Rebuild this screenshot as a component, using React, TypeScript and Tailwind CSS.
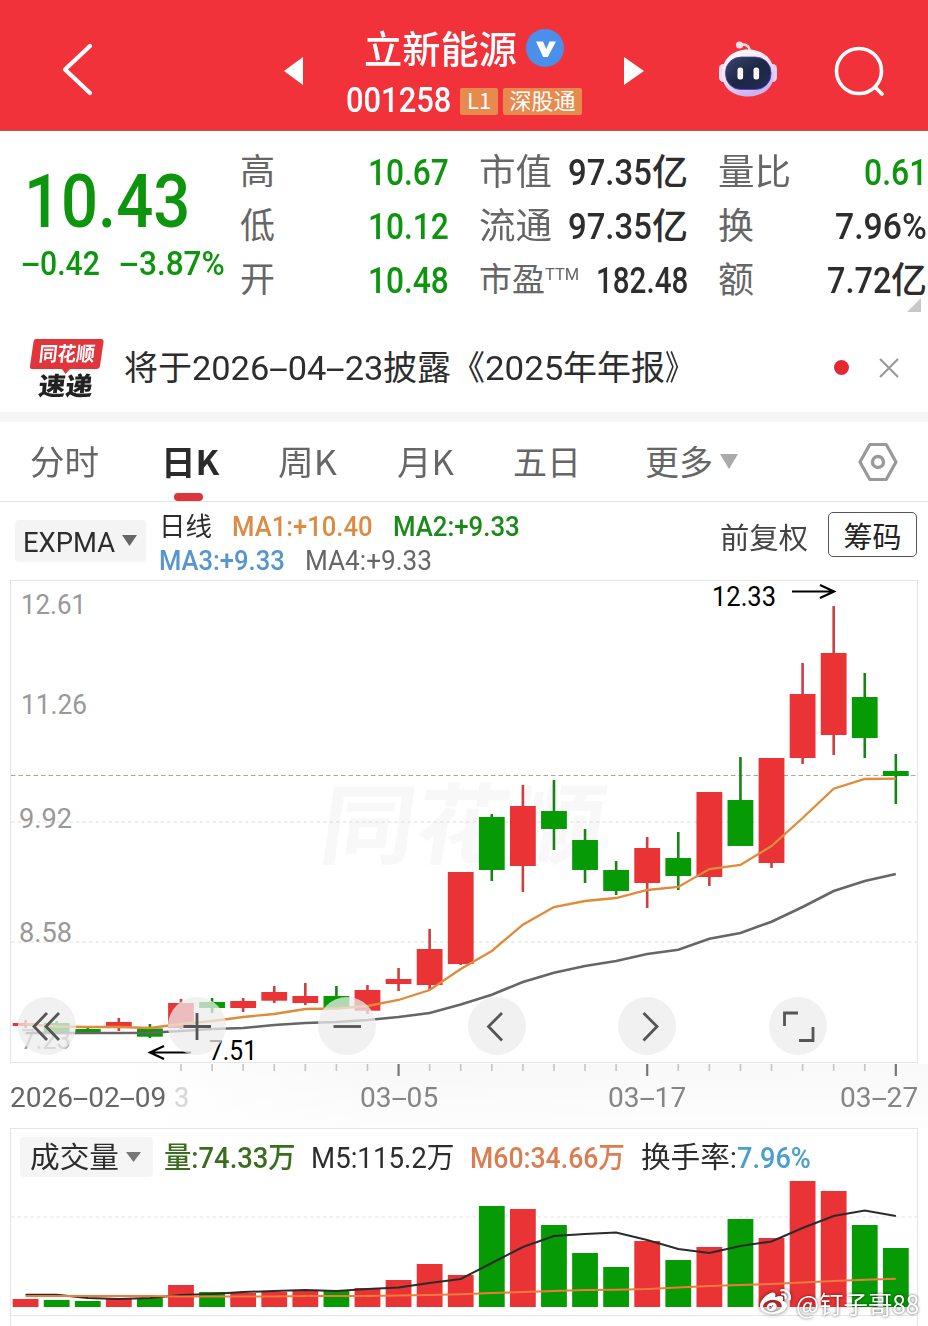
import { useLayoutEffect, useRef } from 'react';
import type { ReactNode } from 'react';
import { FaWeibo } from 'react-icons/fa';

const RED = '#e93335';
const GREEN = '#069a04';
const STEP = 31.08;

const xAt = (i: number) => 25.6 + i * STEP;

// [direction, open/close top, open/close bottom, high, low]
type Candle = ['up' | 'down', number, number, number, number];

const candles: Candle[] = [
    ['up', 1023, 1026, 1020, 1028],
    ['down', 1023, 1032, 1021, 1034],
    ['down', 1029, 1033.5, 1028, 1034],
    ['up', 1022, 1027, 1018, 1031],
    ['down', 1028.5, 1036.7, 1024, 1038],
    ['up', 1003, 1028, 999, 1029],
    ['down', 1002, 1008, 998, 1013],
    ['up', 1001, 1008, 998, 1012],
    ['up', 992, 1000.7, 986, 1003],
    ['up', 996, 1003, 983, 1005],
    ['down', 996, 1008, 986, 1009],
    ['up', 990, 1010.7, 985, 1014],
    ['up', 979, 984, 968, 991],
    ['up', 949, 985, 929, 990],
    ['up', 872, 964, 872, 965],
    ['down', 817, 870, 814, 881],
    ['up', 806, 866, 785, 892],
    ['down', 811, 829, 780, 850],
    ['down', 840, 870, 829, 883],
    ['down', 870, 891, 861, 895],
    ['up', 848, 883, 837, 908],
    ['down', 858, 876, 832, 890],
    ['up', 792, 877, 792, 886],
    ['down', 800, 846, 757, 846],
    ['up', 758, 863, 758, 868],
    ['up', 694, 758, 663, 764],
    ['up', 653, 735, 606, 755],
    ['down', 697, 738, 673, 758],
    ['down', 771, 776, 754, 804],
];

const ma1 = [
    1024, 1026.5, 1027, 1027, 1028, 1024, 1021, 1017, 1014, 1009, 1008.5, 1006, 1000, 990, 969, 951, 924.7, 907, 901,
    898, 890, 887, 869, 865, 846, 818, 788.7, 779, 778.7,
];
const ma4 = [
    1033, 1033, 1033, 1033, 1032.7, 1031, 1029, 1028, 1025, 1023, 1022, 1020, 1017, 1013, 1004.5, 994.7, 982, 972.7, 966,
    961, 954, 949.7, 938.7, 933, 921.7, 907, 891, 881, 874,
];
const volumes = [
    1299, 1300, 1301, 1299, 1298, 1285, 1292, 1293, 1292, 1291, 1291, 1288, 1280, 1264, 1275, 1206, 1209, 1225, 1253,
    1267, 1241, 1260, 1247, 1219, 1238, 1181, 1191, 1225, 1248,
];
const volM5 = [
    1294.7, 1294.7, 1298, 1299, 1298, 1295, 1294, 1292, 1291, 1290, 1291, 1289, 1287.5, 1283, 1279, 1263, 1247, 1236,
    1234, 1232.5, 1240, 1249, 1253, 1246, 1241.5, 1228, 1216, 1210.5, 1216,
];
const volM60 = [
    1296, 1296, 1296, 1296, 1296, 1296.5, 1296.5, 1296.5, 1296.5, 1296, 1296, 1296, 1295.5, 1295, 1294.2, 1293, 1292,
    1291, 1290, 1289.7, 1289, 1287.5, 1286, 1285, 1284, 1282.5, 1281, 1279.8, 1278.7,
];

const toPoints = (ys: number[]) => ys.map((y, i) => `${xAt(i)},${y}`).join(' ');

// Splits the text so that hyphens can be drawn as wide as a digit.
const withDashes = (text: string) =>
    text.split(/(-)/).map((part, i) =>
        part === '-' ? (
            <span key={i} className="mx-[0.13em] inline-block scale-x-[2]">
                -
            </span>
        ) : (
            part
        )
    );

type FitProps = {
    className: string;
    children: ReactNode;
};

// Squeezes a line of text into the width of its box.
const Fit = ({ className, children }: FitProps) => {
    const box = useRef<HTMLDivElement>(null);
    const line = useRef<HTMLSpanElement>(null);

    useLayoutEffect(() => {
        if (!box.current || !line.current) {
            return;
        }
        const scale = box.current.clientWidth / line.current.offsetWidth;
        line.current.style.transform = `scaleX(${scale})`;
    }, []);

    return (
        <div ref={box} className={`shrink-0 whitespace-nowrap ${className}`}>
            <span ref={line} className="inline-block origin-left">
                {typeof children === 'string' ? withDashes(children) : children}
            </span>
        </div>
    );
};

const Caret = ({ className }: { className: string }) => (
    <svg viewBox="0 0 16 12" preserveAspectRatio="none" className={className}>
        <path d="M0 0H16L8 12Z" fill="currentColor" />
    </svg>
);

const RobotIcon = () => (
    <svg viewBox="0 0 60 58" className="h-[58px] w-[60px]">
        <defs>
            <linearGradient id="shell" x1="0" y1="0" x2="0.4" y2="1">
                <stop offset="0" stopColor="#ffffff" />
                <stop offset="0.55" stopColor="#f1e2f3" />
                <stop offset="1" stopColor="#c9b4f0" />
            </linearGradient>
            <linearGradient id="visor" x1="0" y1="0" x2="1" y2="1">
                <stop offset="0" stopColor="#3a466c" />
                <stop offset="0.5" stopColor="#1d2745" />
                <stop offset="1" stopColor="#222a55" />
            </linearGradient>
        </defs>
        <path d="M22 6C26 3 31 5 32 11" fill="none" stroke="#ffdfe4" strokeWidth="2.4" strokeLinecap="round" />
        <circle cx="21.5" cy="5" r="3.6" fill="#ffe3e7" />
        <rect x="1" y="24" width="9" height="18" rx="4.5" fill="#f6dcea" />
        <rect x="50" y="24" width="9" height="18" rx="4.5" fill="#e6d2f5" />
        <path d="M30 9.500C45 9.500 56 19 56 33.500C56 48 45 56.500 30 56.500C15 56.500 4 48 4 33.500C4 19 15 9.500 30 9.500Z" fill="url(#shell)" />
        <rect x="7.500" y="17" width="45.500" height="32.500" rx="15.500" fill="url(#visor)" stroke="#4a3fc0" strokeWidth="0.8" />
        <rect x="19.500" y="27.500" width="5.600" height="12" rx="2.500" fill="#fff" />
        <rect x="35.500" y="27.500" width="5.600" height="12" rx="2.500" fill="#fff" />
    </svg>
);

const Header = () => (
    <header className="flex h-[131px] items-start border-b border-[#b85560] bg-[#f1323a] text-white">
        <svg viewBox="0 0 32 54" className="mt-[42px] ml-[61px] h-[54px] w-8">
            <path d="M29 4L4 27.500L29 51" fill="none" stroke="#fff" strokeWidth="4.200" strokeLinecap="round" strokeLinejoin="round" />
        </svg>
        <svg viewBox="0 0 20 28" className="mt-[57px] ml-[191px] h-7 w-5">
            <path d="M0 14L19 0V28Z" fill="#fff" />
        </svg>
        <div className="ml-[42px] w-[238px] pt-[20px]">
            <div className="flex h-[54px] items-center pl-[18px]">
                <Fit className="w-[153px] text-[38px] leading-[50px] font-medium">立新能源</Fit>
                <svg viewBox="0 0 38 38" className="mt-px ml-[9px] size-[38px]">
                    <circle cx="19" cy="19" r="19" fill="#4a90ea" />
                    <path d="M10 12.500H17L20.300 20L23.500 12.500H30L21.800 28H17.200Z" fill="#fff" />
                </svg>
            </div>
            <div className="flex h-[54px] items-center">
                <Fit className="w-[105px] font-['Roboto'] text-[35px] leading-[40px] font-medium">001258</Fit>
                <div className="ml-[9px] flex h-[27px] w-[38px] items-center justify-center rounded-[2px] bg-[#e68a4e]">
                    <Fit className="-mt-[3px] w-[24px] text-[22px] leading-[25px]">L1</Fit>
                </div>
                <div className="ml-[5px] flex h-[27px] w-[79px] items-center justify-center rounded-[2px] bg-[#e68a4e]">
                    <Fit className="-mt-[4px] w-[66px] text-[22px] leading-[25px]">深股通</Fit>
                </div>
            </div>
        </div>
        <svg viewBox="0 0 20 28" className="mt-[57px] ml-[40px] h-7 w-5">
            <path d="M0 0L20 14L0 28Z" fill="#fff" />
        </svg>
        <div className="mt-[40px] ml-[74px]">
            <RobotIcon />
        </div>
        <svg viewBox="0 0 52 52" className="mt-[46px] ml-[56px] size-[52px]">
            <circle cx="25" cy="25" r="22.500" fill="none" stroke="#fff" strokeWidth="3.600" />
            <path d="M41 41L48 48" stroke="#fff" strokeWidth="3.800" strokeLinecap="round" />
        </svg>
    </header>
);

const Quote = () => (
    <section className="flex h-[200px] pt-[14px]">
        <div className="w-[240px] pl-[22px] font-['Roboto'] font-medium text-[#0d950d]">
            <Fit className="mt-[12px] ml-[2px] w-[166px] text-[75px] leading-[88px]">10.43</Fit>
            <div className="mt-[-3px] flex">
                <Fit className="w-[78px] text-[34px] leading-[42px]">-0.42</Fit>
                <Fit className="ml-[20px] w-[105px] text-[34px] leading-[42px]">-3.87%</Fit>
            </div>
        </div>
        <div className="grid w-[209px] auto-rows-[54px] grid-cols-[1fr_auto] text-[#666]">
            {[
                ['高', '10.67'],
                ['低', '10.12'],
                ['开', '10.48'],
            ].map(([label, value]) => (
                <div key={label} className="contents">
                    <span className="-mt-[3px] text-[35px] leading-[54px]">{label}</span>
                    <Fit className="w-[81px] font-['Roboto'] text-[36px] leading-[56px] font-medium text-[#0d950d]">{value}</Fit>
                </div>
            ))}
        </div>
        <div className="ml-[30px] w-[209px] text-[#666]">
            {['市值', '流通'].map((label) => (
                <div key={label} className="flex h-[54px] justify-between">
                    <Fit className="-mt-[3px] w-[73px] text-[36px] leading-[54px]">{label}</Fit>
                    <div className="flex text-[#2d2d2d]">
                        <Fit className="w-[84px] font-['Roboto'] text-[36px] leading-[56px] font-medium">97.35</Fit>
                        <span className="-mt-[3px] w-[36px] text-[36px] leading-[54px] font-medium">亿</span>
                    </div>
                </div>
            ))}
            <div className="flex h-[54px] justify-between">
                <div className="flex">
                    <Fit className="-mt-[3px] w-[66px] text-[33px] leading-[54px]">市盈</Fit>
                    <Fit className="w-[34px] font-['Roboto'] text-[17px] leading-[42px]">TTM</Fit>
                </div>
                <Fit className="w-[92px] font-['Roboto'] text-[36px] leading-[56px] font-medium text-[#2d2d2d]">182.48</Fit>
            </div>
        </div>
        <div className="ml-[30px] w-[209px] text-[#666]">
            <div className="flex h-[54px] justify-between">
                <Fit className="-mt-[3px] w-[73px] text-[36px] leading-[54px]">量比</Fit>
                <Fit className="w-[63px] font-['Roboto'] text-[36px] leading-[56px] font-medium text-[#0d950d]">0.61</Fit>
            </div>
            <div className="flex h-[54px] justify-between">
                <span className="-mt-[3px] text-[36px] leading-[54px]">换</span>
                <Fit className="w-[92px] font-['Roboto'] text-[36px] leading-[56px] font-medium text-[#2d2d2d]">7.96%</Fit>
            </div>
            <div className="flex h-[54px] justify-between">
                <span className="-mt-[3px] text-[36px] leading-[54px]">额</span>
                <div className="flex text-[#2d2d2d]">
                    <Fit className="w-[64px] font-['Roboto'] text-[36px] leading-[56px] font-medium">7.72</Fit>
                    <span className="-mt-[3px] w-[36px] text-[36px] leading-[54px] font-medium">亿</span>
                </div>
            </div>
            <svg viewBox="0 0 14 14" className="-mt-[9px] mr-[6px] ml-auto size-[14px]">
                <path d="M14 0V14H0Z" fill="#c8c8c8" />
            </svg>
        </div>
    </section>
);

const NewsStrip = () => (
    <section className="flex h-[81px] items-center pb-[8px]">
        <div className="relative ml-[30px] h-[60px] w-[74px]">
            <svg viewBox="0 0 74 60" className="absolute inset-0">
                <path d="M6 1H71Q74 1 73.500 4L70 28Q69.500 31 66.500 31H40L35.500 36L32 31H2Q-.4 31 0 28L3.500 4Q4 1 6 1Z" fill="#e0353a" />
            </svg>
            <Fit className="absolute top-[3px] left-[9px] w-[56px] -skew-x-6 text-[20px] leading-[24px] font-bold text-white">同花顺</Fit>
            <Fit className="absolute top-[34px] left-[9px] w-[54px] -skew-x-6 text-[25px] leading-[24px] font-black text-[#222]">速递</Fit>
        </div>
        <div className="-mt-[2px] ml-[20px] flex text-[34px] leading-[50px] text-[#2d2d2d]">
            <Fit className="w-[68px]">将于</Fit>
            <Fit className="mt-[2px] w-[191px] font-['Roboto']">2026-04-23</Fit>
            <Fit className="w-[68px]">披露</Fit>
            <Fit className="w-[34px]">《</Fit>
            <Fit className="mt-[2px] w-[78px] font-['Roboto']">2025</Fit>
            <Fit className="w-[102px]">年年报</Fit>
            <Fit className="w-[28px]">》</Fit>
        </div>
        <span className="ml-[141px] size-[15px] rounded-full bg-[#e3292f]" />
        <svg viewBox="0 0 20 20" className="ml-[30px] size-5">
            <path d="M1 1L19 19M19 1L1 19" stroke="#999" strokeWidth="2.200" />
        </svg>
    </section>
);

const Tabs = () => (
    <nav className="flex h-[90px] border-t-[10px] border-b border-t-[#f6f6f6] border-b-[#e4e4e4] pl-[30px] text-[34px] leading-[78px] text-[#666]">
        <Fit className="w-[69px]">分时</Fit>
        <div className="relative ml-[62px] w-[58px]">
            <Fit className="w-[58px] font-bold text-[#2b2b2b]">日K</Fit>
            <span className="absolute top-[71px] left-[13px] h-[8px] w-[29px] rounded-full bg-[#dd353a]" />
        </div>
        <Fit className="ml-[59px] w-[59px]">周K</Fit>
        <Fit className="ml-[60px] w-[57px]">月K</Fit>
        <Fit className="ml-[59px] w-[68px]">五日</Fit>
        <Fit className="ml-[64px] w-[68px]">更多</Fit>
        <Caret className="mt-[32px] ml-[7px] h-[15px] w-[18px] text-[#aaa]" />
        <svg viewBox="0 0 40 40" className="mt-[20px] ml-[120px] size-10">
            <path d="M11.800 2.500H28.200L38 20L28.200 37.500H11.800L2 20Z" fill="none" stroke="#999" strokeWidth="3.200" strokeLinejoin="round" />
            <circle cx="20" cy="20" r="5.500" fill="none" stroke="#999" strokeWidth="3.400" />
        </svg>
    </nav>
);

const Indicators = () => (
    <section className="flex h-[78px]">
        <button className="mt-[18px] ml-[15px] flex h-[42px] w-[131px] items-center rounded-[4px] bg-[#f4f4f4] pl-[8px] text-[#2d2d2d]">
            <Fit className="mt-[3px] w-[92px] text-left font-['Roboto'] text-[28px] leading-[42px]">EXPMA</Fit>
            <Caret className="-mt-[2px] ml-[7px] h-[11px] w-[15px] text-[#666]" />
        </button>
        <div className="ml-[13px] w-[440px] pt-[7px] font-['Roboto'] text-[28px] leading-[35px]">
            <div className="flex h-[34px]">
                <Fit className="-mt-[2px] w-[53px] font-['Noto_Sans_CJK_SC'] text-[26px] text-[#2d2d2d]">日线</Fit>
                <Fit className="ml-[20px] w-[141px] font-medium text-[#dc8b42]">MA1:+10.40</Fit>
                <Fit className="ml-[20px] w-[127px] font-medium text-[#1b8a1b]">MA2:+9.33</Fit>
            </div>
            <div className="flex h-[35px]">
                <Fit className="w-[126px] font-medium text-[#5695cf]">MA3:+9.33</Fit>
                <Fit className="ml-[20px] w-[127px] text-[#666]">MA4:+9.33</Fit>
            </div>
        </div>
        <Fit className="ml-[121px] w-[88px] pt-[8px] text-[29px] leading-[52px] text-[#444]">前复权</Fit>
        <button className="mt-[10px] ml-[20px] flex h-[45px] w-[89px] items-center justify-center rounded-[5px] border border-[#555] text-[29px] leading-[40px] text-[#222]">
            <Fit className="w-[58px]">筹码</Fit>
        </button>
    </section>
);

type LabelProps = {
    x: number;
    y: number;
    width: number;
    fill: string;
    children: string;
};

const ChartLabel = ({ x, y, width, fill, children }: LabelProps) => (
    <text x={x} y={y} textLength={width} lengthAdjust="spacingAndGlyphs" fill={fill} className="font-['Roboto'] text-[27px]">
        {children}
    </text>
);

const controls = [
    { name: 'rewind', gap: 'ml-[18px]', path: 'M29 16L16 29.500L29 43M41 16L28 29.500L41 43' },
    { name: 'zoom in', gap: 'ml-[92px]', path: 'M29 16V43M15.500 29.500H43' },
    { name: 'zoom out', gap: 'ml-[92px]', path: 'M15.500 29.500H43' },
    { name: 'previous', gap: 'ml-[92px]', path: 'M34 16L20.500 29.500L34 43.500' },
    { name: 'next', gap: 'ml-[92px]', path: 'M25.500 16L39 29.500L25.500 43.500' },
    { name: 'fullscreen', gap: 'ml-[93px]', path: 'M15.500 29V16H29M44 30V43.500H30' },
];

const PriceChart = () => (
    <section className="relative h-[548px]">
        <svg viewBox="0 580 928 548" className="h-[548px] w-[928px]">
            <defs>
                <linearGradient id="haze" x1="0" y1="0" x2="1" y2="0">
                    <stop offset="0" stopColor="#f8f8f8" stopOpacity="0" />
                    <stop offset="0.3" stopColor="#f8f8f8" />
                    <stop offset="1" stopColor="#f9f9f9" />
                </linearGradient>
                <linearGradient id="hazeFade" x1="0" y1="0" x2="0" y2="1">
                    <stop offset="0" stopColor="#fff" stopOpacity="0" />
                    <stop offset="1" stopColor="#fff" stopOpacity="0.7" />
                </linearGradient>
            </defs>
            <rect x="120" y="1064" width="808" height="64" fill="url(#haze)" />
            <rect x="120" y="1064" width="808" height="64" fill="url(#hazeFade)" />
            <rect x="10.500" y="580.500" width="907" height="482" fill="#fff" stroke="#e6e6e6" />
            <text
                transform="translate(317 857) skewX(-8)"
                textLength="284"
                lengthAdjust="spacingAndGlyphs"
                fill="#f8f8f8"
                className="font-['Noto_Sans_CJK_SC'] text-[88px] font-bold"
            >
                同花顺
            </text>
            <path d="M11 822H917M11 942H917" stroke="#dcdcdc" strokeDasharray="3.500 3" />
            <path d="M11 775.500H917" stroke="#a9ac8f" strokeDasharray="4.500 3" />

            <ChartLabel x={21} y={614} width={65} fill="#999">12.61</ChartLabel>
            <ChartLabel x={21} y={714} width={66} fill="#999">11.26</ChartLabel>
            <ChartLabel x={19} y={828} width={53} fill="#999">9.92</ChartLabel>
            <ChartLabel x={19} y={942} width={53} fill="#999">8.58</ChartLabel>
            <ChartLabel x={21} y={1049} width={50} fill="#999">7.23</ChartLabel>

            {candles.map(([dir, top, bottom, high, low], i) => {
                const fill = dir === 'up' ? RED : GREEN;
                return (
                    <g key={i}>
                        <rect x={xAt(i) - 1.3} y={high} width={2.6} height={low - high} fill={dir === 'up' ? '#cf3f42' : '#168516'} />
                        <rect x={xAt(i) - 12.9} y={top} width={25.8} height={bottom - top} fill={fill} />
                    </g>
                );
            })}
            <polyline points={toPoints(ma4)} fill="none" stroke="#666" strokeWidth="2.600" />
            <polyline points={toPoints(ma1)} fill="none" stroke="#e08a3a" strokeWidth="2.300" />

            <ChartLabel x={712} y={606} width={64} fill="#000">12.33</ChartLabel>
            <path d="M792 591.500H833M820 585L834 591.500L820 598" fill="none" stroke="#000" strokeWidth="2.200" />
            <ChartLabel x={209} y={1060} width={48} fill="#000">7.51</ChartLabel>
            <path d="M191 1052.500H150M164 1046L150 1052.500L164 1059" fill="none" stroke="#000" strokeWidth="2.200" />

            {candles.map((_, i) =>
                i < 5 ? null : (
                    <path
                        key={i}
                        d={i % 8 === 4 ? `M${xAt(i)} 1064V1076` : `M${xAt(i)} 1064V1071`}
                        stroke={i % 8 === 4 ? '#777' : '#c4c4c4'}
                        strokeWidth={i % 8 === 4 ? 2.2 : 1.6}
                    />
                )
            )}
        </svg>
        <div className="absolute inset-x-0 top-[506px] flex font-['Roboto'] text-[27px] leading-6 text-[#858585]">
            <Fit className="ml-[10px] w-[156px] text-[#666]">2026-02-09</Fit>
            <Fit className="ml-[8px] w-[15px] text-[#d6d6d6]">3</Fit>
            <Fit className="ml-[171px] w-[78px]">03-05</Fit>
            <Fit className="ml-[170px] w-[78px]">03-17</Fit>
            <Fit className="ml-[154px] w-[78px]">03-27</Fit>
        </div>
        <div className="absolute top-[417px] left-0 flex">
            {controls.map(({ name, gap, path }) => (
                <button key={name} aria-label={name} className={`size-[58px] rounded-full bg-[#ececec]/75 ${gap}`}>
                    <svg viewBox="0 0 58 58" className="size-[58px]">
                        <path d={path} fill="none" stroke="#555" strokeWidth="2.800" />
                    </svg>
                </button>
            ))}
        </div>
    </section>
);

const VolumeChart = () => (
    <section className="mx-[10px] h-[188px] w-[908px] border border-[#e6e6e6]">
        <div className="flex h-[52px] items-center pt-[4px] font-['Roboto','Noto_Sans_CJK_SC'] text-[29px] leading-[40px]">
            <button className="ml-[9px] flex h-[40px] w-[133px] shrink-0 items-center rounded-[4px] bg-[#f5f5f5] pl-[9px] text-[#2d2d2d]">
                <Fit className="mt-[2px] w-[89px]">成交量</Fit>
                <Caret className="ml-[8px] h-[10px] w-[15px] text-[#777]" />
            </button>
            <Fit className="mt-[2px] ml-[11px] w-[132px] font-medium text-[#3a6d1e]">量:74.33万</Fit>
            <Fit className="mt-[2px] ml-[15px] w-[143px] text-[#2d2d2d]">M5:115.2万</Fit>
            <Fit className="mt-[2px] ml-[16px] w-[155px] font-medium text-[#dc7c50]">M60:34.66万</Fit>
            <Fit className="mt-[2px] ml-[16px] w-[96px] text-[#2d2d2d]">换手率:</Fit>
            <Fit className="mt-[2px] w-[74px] font-medium text-[#4b9fd0]">7.96%</Fit>
        </div>
        <svg viewBox="11 1181 906 134" className="h-[134px] w-[906px]">
            <path d="M11 1217H917" stroke="#e2e2e2" strokeDasharray="3.500 3" />
            {volumes.map((top, i) => (
                <rect key={i} x={xAt(i) - 12.9} y={top} width={25.8} height={1307 - top} fill={candles[i][0] === 'up' ? RED : GREEN} />
            ))}
            <polyline points={toPoints(volM5)} fill="none" stroke="#2b2b2b" strokeWidth="2" />
            <polyline points={toPoints(volM60)} fill="none" stroke="#ef7a3c" strokeWidth="2" />
        </svg>
    </section>
);

const App = () => (
    <main className="relative h-[1326px] w-[928px] overflow-hidden bg-white font-['Noto_Sans_CJK_SC',sans-serif]">
        <Header />
        <Quote />
        <NewsStrip />
        <Tabs />
        <Indicators />
        <PriceChart />
        <VolumeChart />
        <div className="mx-[10px] h-[20px] w-[908px] border-x border-[#e6e6e6]" />
        <div className="absolute right-[9px] bottom-[8px] flex items-center text-white">
            <FaWeibo className="mr-[5px] size-[31px] drop-shadow-[0_0_2px_rgba(0,0,0,0.6)]" />
            <Fit className="w-[123px] text-[25px] leading-[30px] [text-shadow:0_0_3px_rgba(0,0,0,0.7)]">@钉子哥88</Fit>
        </div>
    </main>
);

export default App;
